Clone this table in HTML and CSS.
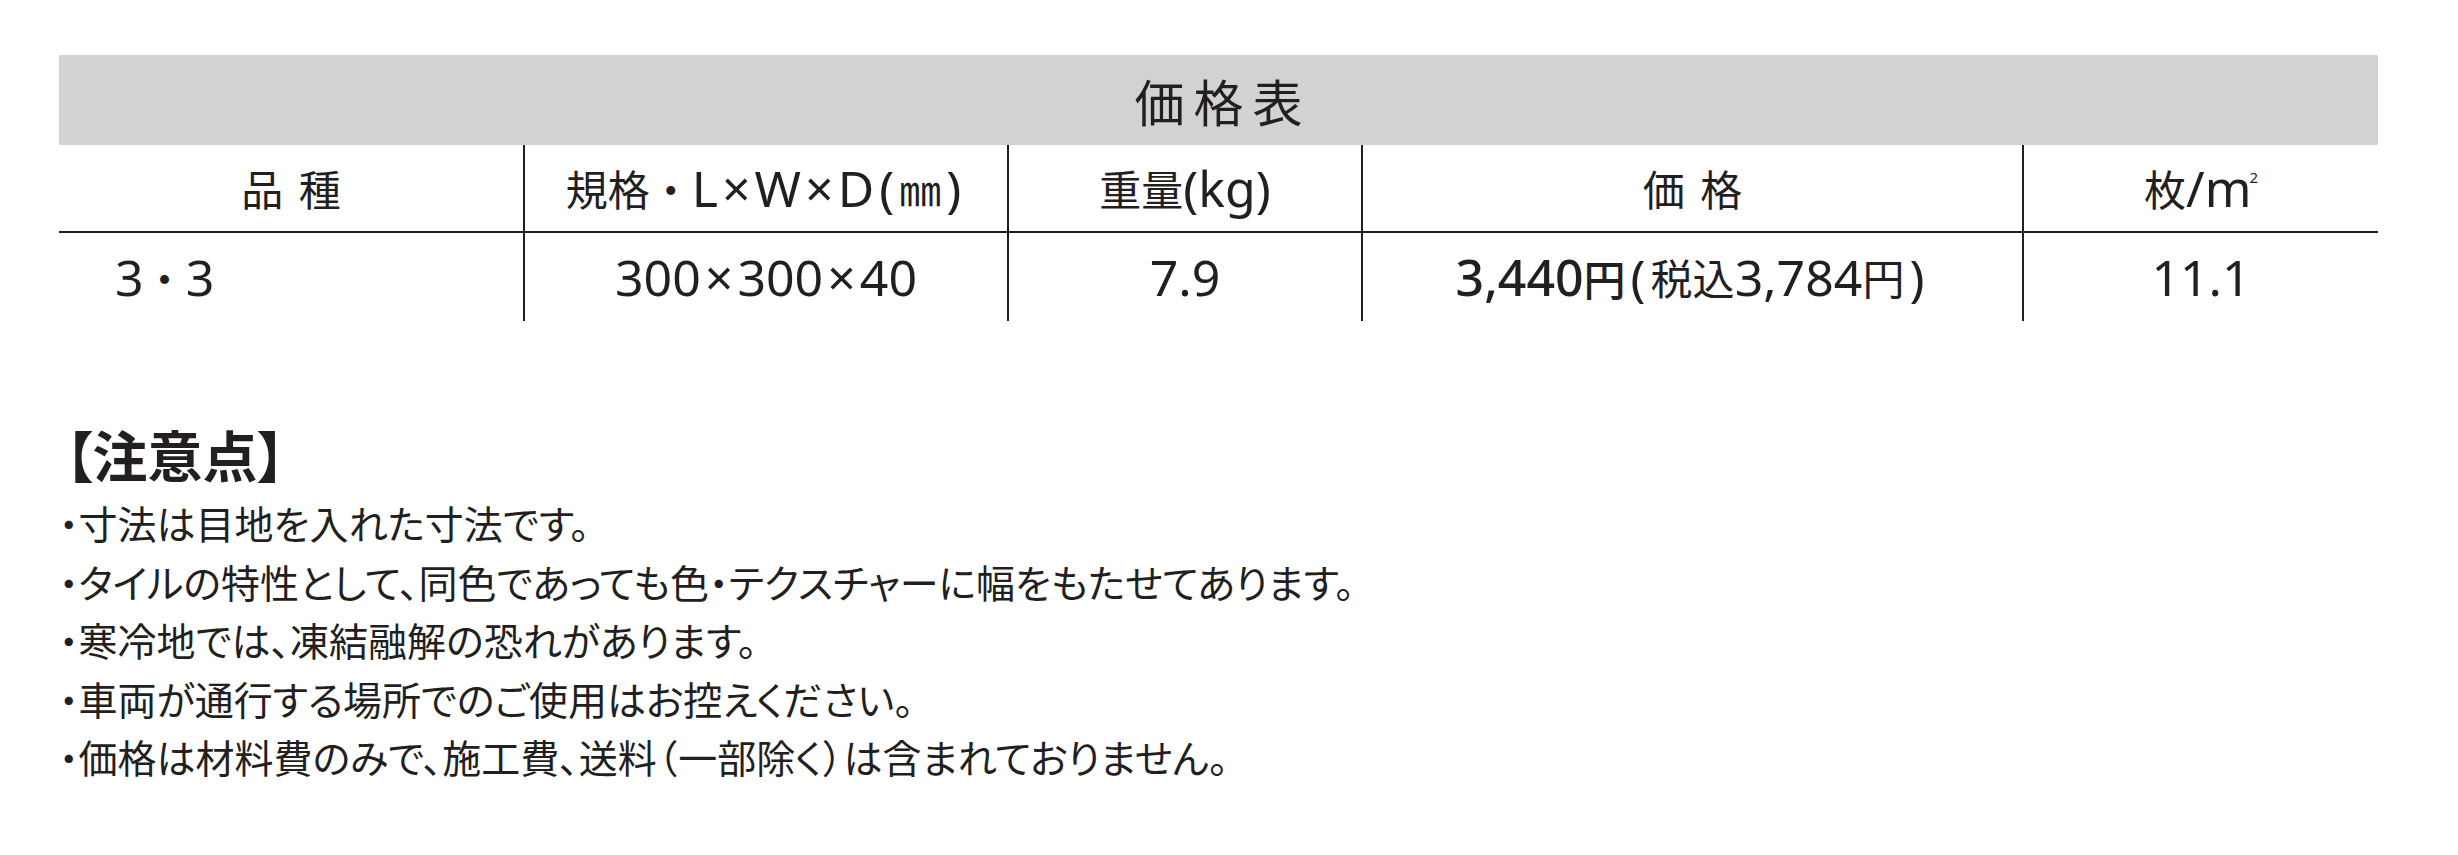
FILE: index.html
```html
<!DOCTYPE html>
<html lang="ja">
<head>
<meta charset="utf-8">
<title>価格表</title>
<link rel="stylesheet" href="styles.css">
</head>
<body>
<div class="page">
  <section class="price-table">
    <div class="title"><span class="title-text">価格表</span></div>
    <div class="grid">
      <div class="cell head">品 種</div>
      <div class="cell head div">規格・<span class="en">L<span class="x">×</span>W<span class="x">×</span>D<span class="paren">(</span></span>㎜<span class="en paren">)</span></div>
      <div class="cell head div">重量<span class="en">(kg)</span></div>
      <div class="cell head div">価 格</div>
      <div class="cell head div">枚<span class="en">/m<span class="sq">2</span></span></div>

      <div class="cell data first"><span class="en">3</span>・<span class="en">3</span></div>
      <div class="cell data div"><span class="en">300<span class="x">×</span>300<span class="x">×</span>40</span></div>
      <div class="cell data div"><span class="en">7.9</span></div>
      <div class="cell data div"><span class="strong"><span class="en">3,440</span>円</span><span class="en paren">(</span>税込<span class="en">3,784</span>円<span class="en paren">)</span></div>
      <div class="cell data div"><span class="en">11.1</span></div>
    </div>
  </section>

  <section class="notes">
    <h2 class="notes-title">【注意点】</h2>
    <ul class="notes-list">
      <li>・寸法は目地を入れた寸法です。</li>
      <li>・タイルの特性として、同色であっても色・テクスチャーに幅をもたせてあります。</li>
      <li>・寒冷地では、凍結融解の恐れがあります。</li>
      <li>・車両が通行する場所でのご使用はお控えください。</li>
      <li>・価格は材料費のみで、施工費、送料<span class="wide">（</span>一部除く<span class="wide">）</span>は含まれておりません。</li>
    </ul>
  </section>
</div>
</body>
</html>
```

FILE: styles.css
```css
html, body {
  margin: 0;
  padding: 0;
  background: #ffffff;
}

body {
  font-family: "Noto Sans CJK JP", "Noto Sans", sans-serif;
  color: #231f20;
}

.page {
  padding: 55px 0 0 59px;
}

.price-table {
  width: 2319px;
}

.title {
  height: 90px;
  background: #d1d2d4;
  display: flex;
  align-items: center;
  justify-content: center;
}

.title-text {
  font-size: 50px;
  line-height: 1;
  letter-spacing: 9px;
  padding-left: 9px;
  color: #231f20;
}

.grid {
  display: grid;
  grid-template-columns: 464px 484px 354px 661px 356px;
}

.cell {
  box-sizing: border-box;
  height: 88px;
  display: flex;
  align-items: center;
  justify-content: center;
  font-size: 42px;
  line-height: 1;
  white-space: nowrap;
}

.head {
  border-bottom: 2px solid #231f20;
  word-spacing: 6px;
}

.div {
  border-left: 2px solid #231f20;
}

.data.first {
  justify-content: flex-start;
  padding-left: 56px;
}

.en {
  font-family: "Noto Sans", "Noto Sans CJK JP", sans-serif;
  font-size: 50px;
}

.x {
  margin: 0 4px;
}

.paren {
  margin: 0 5px;
}

.sq {
  font-size: 15px;
  vertical-align: 24px;
  margin-left: -2px;
}

.strong {
  font-weight: 500;
}

.notes {
  margin-top: 97px;
}

.notes-title {
  margin: 0;
  font-size: 55px;
  line-height: 70px;
  font-weight: 700;
  font-feature-settings: "palt";
  padding-left: 6px;
}

.notes-list {
  list-style: none;
  margin: 5px 0 0;
  padding: 0;
}

.notes-list li {
  font-size: 39px;
  line-height: 58.5px;
  font-feature-settings: "palt";
  white-space: nowrap;
}

.wide {
  margin: 0 1px;
}
```
